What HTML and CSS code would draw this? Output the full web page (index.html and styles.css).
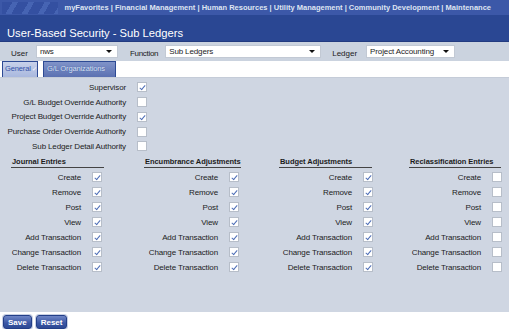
FILE: index.html
```html
<!DOCTYPE html>
<html lang="en">
<head>
    <meta charset="UTF-8">
    <title>User-Based Security - Sub Ledgers</title>
    <link rel="stylesheet" href="styles.css">
</head>
<body>
    <div class="topnav">
        <div class="stripes"></div>
        <div class="links">
            <a href="#">myFavorites</a> | <a href="#">Financial Management</a> | <a href="#">Human Resources</a> | <a href="#">Utility Management</a> | <a href="#">Community Development</a> | <a href="#">Maintenance</a>
        </div>
    </div>

    <div class="titlebar">
        <h1>User-Based Security - Sub Ledgers</h1>
    </div>

    <div class="filters">
        <span class="flabel">User</span>
        <div class="select sel-user">nws</div>
        <span class="flabel lbl-function">Function</span>
        <div class="select sel-function">Sub Ledgers</div>
        <span class="flabel lbl-ledger">Ledger</span>
        <div class="select sel-ledger">Project Accounting</div>
    </div>

    <div class="tabs">
        <span class="tab active">General<span class="tick">&#10003;</span></span>
        <span class="tab tab-gl">G/L Organizations</span>
    </div>

    <div class="panel">
        <div class="authority">
            <div class="arow"><span>Supervisor</span><span class="cb on"></span></div>
            <div class="arow"><span>G/L Budget Override Authority</span><span class="cb"></span></div>
            <div class="arow"><span>Project Budget Override Authority</span><span class="cb on"></span></div>
            <div class="arow"><span>Purchase Order Override Authority</span><span class="cb"></span></div>
            <div class="arow"><span>Sub Ledger Detail Authority</span><span class="cb"></span></div>
        </div>

        <div class="groups">
            <div class="group g1">
                <h3>Journal Entries</h3>
                <div class="grow"><span>Create</span><span class="cb on"></span></div>
                <div class="grow"><span>Remove</span><span class="cb on"></span></div>
                <div class="grow"><span>Post</span><span class="cb on"></span></div>
                <div class="grow"><span>View</span><span class="cb on"></span></div>
                <div class="grow"><span>Add Transaction</span><span class="cb on"></span></div>
                <div class="grow"><span>Change Transaction</span><span class="cb on"></span></div>
                <div class="grow"><span>Delete Transaction</span><span class="cb on"></span></div>
            </div>
            <div class="group g2">
                <h3>Encumbrance Adjustments</h3>
                <div class="grow"><span>Create</span><span class="cb on"></span></div>
                <div class="grow"><span>Remove</span><span class="cb on"></span></div>
                <div class="grow"><span>Post</span><span class="cb on"></span></div>
                <div class="grow"><span>View</span><span class="cb on"></span></div>
                <div class="grow"><span>Add Transaction</span><span class="cb on"></span></div>
                <div class="grow"><span>Change Transaction</span><span class="cb on"></span></div>
                <div class="grow"><span>Delete Transaction</span><span class="cb on"></span></div>
            </div>
            <div class="group g3">
                <h3>Budget Adjustments</h3>
                <div class="grow"><span>Create</span><span class="cb on"></span></div>
                <div class="grow"><span>Remove</span><span class="cb on"></span></div>
                <div class="grow"><span>Post</span><span class="cb on"></span></div>
                <div class="grow"><span>View</span><span class="cb on"></span></div>
                <div class="grow"><span>Add Transaction</span><span class="cb on"></span></div>
                <div class="grow"><span>Change Transaction</span><span class="cb on"></span></div>
                <div class="grow"><span>Delete Transaction</span><span class="cb on"></span></div>
            </div>
            <div class="group g4">
                <h3>Reclassification Entries</h3>
                <div class="grow"><span>Create</span><span class="cb"></span></div>
                <div class="grow"><span>Remove</span><span class="cb"></span></div>
                <div class="grow"><span>Post</span><span class="cb"></span></div>
                <div class="grow"><span>View</span><span class="cb"></span></div>
                <div class="grow"><span>Add Transaction</span><span class="cb"></span></div>
                <div class="grow"><span>Change Transaction</span><span class="cb"></span></div>
                <div class="grow"><span>Delete Transaction</span><span class="cb"></span></div>
            </div>
        </div>
    </div>

    <div class="actions">
        <button class="btn">Save</button>
        <button class="btn">Reset</button>
    </div>
</body>
</html>
```

FILE: styles.css
```css
* {
    margin: 0;
    padding: 0;
    box-sizing: border-box;
}

body {
    font-family: "Liberation Sans", Arial, sans-serif;
    font-size: 8px;
    letter-spacing: -0.13px;
    color: #1c1c1c;
    background: white;
    width: 509px;
    white-space: nowrap;
}

/* top navigation strip */
.topnav {
    height: 15px;
    background: #3c58a8;
    display: flex;
    align-items: center;
    justify-content: space-between;
    padding: 0 18px 0 2px;
}

.stripes {
    width: 56px;
    height: 12px;
    background: repeating-linear-gradient(120deg, #3450a1 0 9px, #4664b3 9px 14px);
}

.links {
    color: #dfe5f2;
    font-weight: bold;
    font-size: 7.5px;
    letter-spacing: 0;
}

.links a {
    color: #dfe5f2;
    text-decoration: none;
}

/* page title */
.titlebar {
    height: 27px;
    background: #2a4793;
    border-bottom: 1px solid #223b80;
    padding: 11px 0 0 7px;
}

.titlebar h1 {
    font-size: 11.2px;
    font-weight: normal;
    color: white;
    line-height: 14px;
    letter-spacing: 0;
}

/* filter row */
.filters {
    height: 19px;
    background: #cbd3df;
    display: flex;
    align-items: center;
    padding: 0 0 0 11px;
    letter-spacing: 0;
}

.flabel {
    margin-top: 3px;
}

.select {
    position: relative;
    height: 13px;
    background: white;
    border: 1px solid #c2c9d4;
    line-height: 11px;
    padding-left: 3px;
    margin-left: 8px;
    letter-spacing: -0.13px;
}

.select::after {
    content: "";
    position: absolute;
    right: 5px;
    top: 4px;
    border-left: 3px solid transparent;
    border-right: 3px solid transparent;
    border-top: 3px solid #111;
}

.sel-user { width: 82px; }
.sel-function { width: 156px; margin-left: 7px; }
.sel-ledger { width: 89px; margin-left: 9px; }
.lbl-function { margin-left: 12px; letter-spacing: -0.3px; }
.lbl-ledger { margin-left: 11px; }

/* tabs */
.tabs {
    height: 17px;
    display: flex;
    align-items: flex-end;
    gap: 5px;
    padding-left: 2px;
    border-bottom: 1px solid #c5ccd8;
}

.tab {
    height: 16px;
    font-size: 7.5px;
    line-height: 14px;
    border: 1px solid #2d4a94;
    border-bottom: none;
    background: linear-gradient(#8093c8, #5b71b2);
    color: #dfe6f6;
    text-shadow: 0 0 1px #2a4793;
}

.tab.active {
    width: 36px;
    padding-left: 2px;
    background: linear-gradient(#c7d1ea, #a9b8de);
    color: #3453a8;
    text-shadow: none;
}

.tab-gl {
    width: 73px;
    padding-left: 3px;
}

.tick {
    color: white;
    font-size: 6px;
    margin-left: 1px;
}

/* main panel */
.panel {
    height: 234px;
    background: #cfd6e2;
    padding-top: 2px;
}

.arow {
    height: 14.75px;
    display: flex;
    align-items: center;
}

.arow span:first-child {
    width: 126px;
    text-align: right;
    margin-right: 11px;
}

.cb {
    display: inline-block;
    width: 10px;
    height: 10px;
    background: white;
    border: 1px solid #b7bec9;
    position: relative;
    flex: none;
}

.cb.on::after {
    content: "";
    position: absolute;
    left: 3px;
    top: 1px;
    width: 2px;
    height: 5px;
    border-right: 1px solid #4f6fb8;
    border-bottom: 1px solid #4f6fb8;
    transform: rotate(40deg);
}

.groups {
    display: flex;
    padding-left: 11px;
    margin-top: 3px;
}

.group h3 {
    font-size: 7.5px;
    letter-spacing: -0.05px;
    font-weight: bold;
    height: 11px;
    line-height: 10px;
    padding-left: 1px;
    border-bottom: 1px solid #444;
    margin-bottom: 2px;
}

.grow {
    height: 15px;
    display: flex;
    align-items: center;
    justify-content: flex-end;
}

.grow span:first-child {
    margin-right: 11px;
}

.g1 { width: 93px; margin-right: 40px; }
.g2 { width: 97px; margin-right: 38px; }
.g3 { width: 93px; margin-right: 37px; }
.g4 { width: 92px; }

.g1 .cb, .g2 .cb { margin-right: 2px; }
.g3 .cb, .g4 .cb { margin-right: -1px; }

/* buttons */
.actions {
    display: flex;
    gap: 4px;
    padding: 3px 0 0 3px;
}

.btn {
    height: 14px;
    padding: 0 4px;
    font-family: inherit;
    font-size: 8px;
    font-weight: bold;
    color: white;
    background: linear-gradient(#6f86c6, #3a56a4 60%, #2e4994);
    border: 1px solid #233f88;
    border-radius: 3px;
    box-shadow: 0 0 0 1px #c8d0e4;
}
```
